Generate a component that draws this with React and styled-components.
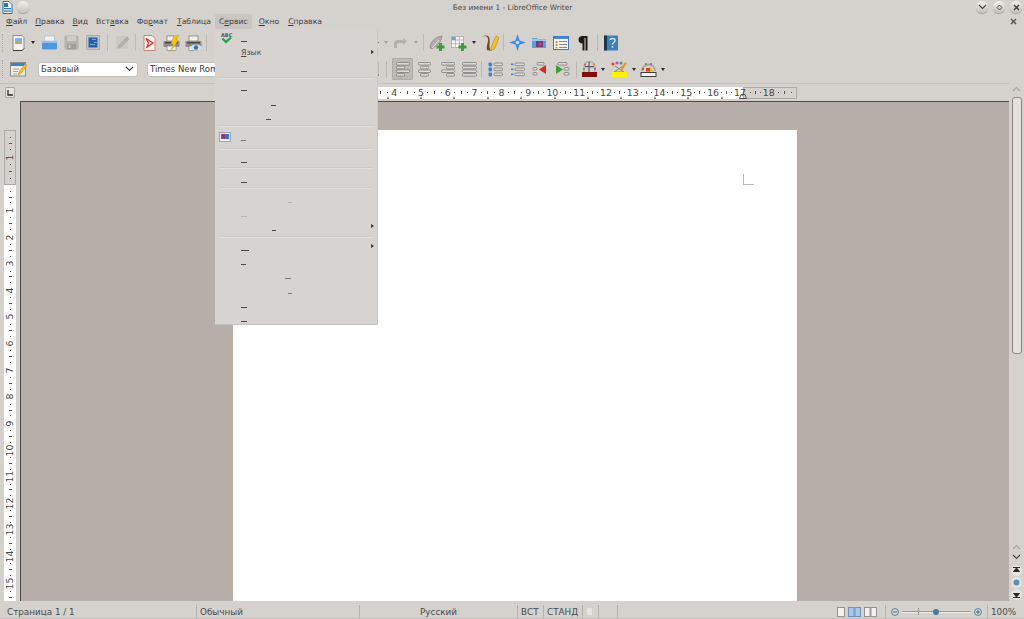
import React from 'react';
import styled, { createGlobalStyle } from 'styled-components';

const GlobalStyle = createGlobalStyle`
  html, body {
    margin: 0;
    padding: 0;
    width: 1024px;
    height: 619px;
    overflow: hidden;
    background: #d5d1cd;
  }
  #root { width: 1024px; height: 619px; }
`;

const CM = 26.8;
const CM_V = 26.64;

const Window = styled.div`
  position: relative;
  display: flex;
  flex-direction: column;
  width: 1024px;
  height: 619px;
  overflow: hidden;
  background: #d5d1cd;
  color: #3f3d3c;
  font-family: "DejaVu Sans", sans-serif;
  font-size: 7.7px;
`;

const TitleBar = styled.div`
  display: flex;
  align-items: center;
  height: 14px;
  padding: 0 0 0 2px;
  flex: none;
`;

const Title = styled.div`
  flex: 1;
  text-align: center;
  margin-left: 20px;
  padding-top: 1px;
  font-size: 7.4px;
  color: #4a4847;
`;

const WinButtons = styled.div`
  display: flex;
  gap: 5px;
  padding-right: 2px;
`;

const RoundBtn = styled.div`
  display: flex;
  align-items: center;
  justify-content: center;
  width: 12px;
  height: 12px;
  border-radius: 50%;
  background: linear-gradient(#f2f0ee, #c4c0bc);
  box-shadow: 0 1px 1px rgba(0, 0, 0, 0.25);
  margin-left: ${p => p.$ml || 0}px;
`;

const MenuBar = styled.div`
  display: flex;
  align-items: center;
  height: 15px;
  padding: 0 3px 0 2px;
  flex: none;
`;

const MenuName = styled.div`
  padding: 0 4px 0 4px;
  margin-right: ${p => p.$mr || 0}px;
  height: 15px;
  line-height: 16px;
  border-radius: 2px;
  background: ${p => (p.$open ? '#c9c5c1' : 'transparent')};
  u { text-underline-offset: 1px; }
`;

const CloseDoc = styled.div`
  margin-left: auto;
  padding-right: 4px;
  display: flex;
`;

const Toolbar = styled.div`
  display: flex;
  align-items: center;
  height: ${p => p.$h}px;
  padding-left: 2px;
  flex: none;
`;

const Grip = styled.div`
  width: 0;
  height: 18px;
  margin-right: 4px;
  border-left: 1px dotted #aaa6a2;
`;

const Tool = styled.div`
  display: flex;
  align-items: center;
  justify-content: center;
  flex: none;
  width: ${p => p.$w}px;
  height: ${p => (p.$active ? 22 : 20)}px;
  border-radius: 2px;
  background: ${p => (p.$active ? '#bdb9b5' : 'transparent')};
  box-shadow: ${p => (p.$active ? 'inset 0 0 0 1px #aeaaa6' : 'none')};
`;

const Sep = styled.div`
  display: flex;
  justify-content: center;
  flex: none;
  width: ${p => p.$w}px;
  &::after {
    content: '';
    width: 1px;
    height: 17px;
    background: #bcb8b4;
  }
`;

const Drop = styled.div`
  display: flex;
  align-items: center;
  justify-content: center;
  flex: none;
  width: ${p => p.$w}px;
  &::after {
    content: '';
    border-left: 2.5px solid transparent;
    border-right: 2.5px solid transparent;
    border-top: 3px solid ${p => (p.$dim ? '#a5a19d' : '#2c2a29')};
  }
`;

const Gap = styled.div`
  flex: none;
  width: ${p => p.$w}px;
`;

const Combo = styled.div`
  display: flex;
  align-items: center;
  justify-content: space-between;
  flex: none;
  box-sizing: border-box;
  width: 100px;
  height: 15px;
  padding: 0 3px 0 2px;
  background: #fff;
  border: 1px solid #c2beba;
  border-radius: 3px;
  font-size: 8.5px;
  color: #3a3837;
`;

const Body = styled.div`
  display: flex;
  flex: 1;
  min-height: 0;
  margin-top: 1px;
`;

const LeftCol = styled.div`
  display: flex;
  flex-direction: column;
  flex: 1;
  min-width: 0;
`;

const RulerRow = styled.div`
  display: flex;
  align-items: flex-end;
  height: 18px;
  flex: none;
  padding-left: 5px;
  padding-bottom: 2px;
  border-top: 1px solid #c3bfbb;
  box-sizing: border-box;
`;

const Corner = styled.div`
  display: flex;
  align-items: center;
  justify-content: center;
  box-sizing: border-box;
  width: 10px;
  height: 11px;
  margin-right: 218px;
  margin-bottom: 1px;
  background: #e4e1de;
  border: 1px solid #a9a5a1;
  border-radius: 1px;
`;

const HRuler = styled.div`
  display: flex;
  height: 12px;
  width: 564px;
  box-sizing: border-box;
`;

const RulerGrey = styled.div`
  display: flex;
  flex-direction: ${p => (p.$vert ? 'column' : 'row')};
  flex: none;
  box-sizing: border-box;
  overflow: hidden;
  ${p => (p.$vert
    ? `height: ${p.$len}px; width: 12px; padding-top: ${p.$pad}px;`
    : `width: ${p.$len}px; height: 12px; padding-left: ${p.$pad}px; padding-bottom: 1px;`)}
  background: #d5d1cd;
  border: 1px solid #aeaaa6;
`;

const RulerWhite = styled.div`
  position: relative;
  z-index: 1;
  display: flex;
  flex-direction: ${p => (p.$vert ? 'column' : 'row')};
  flex: none;
  box-sizing: border-box;
  ${p => (p.$vert
    ? `flex: 1; min-height: 0; width: 12px; padding-top: ${p.$pad}px; overflow: hidden;`
    : `width: ${p.$len}px; height: 12px; padding-left: ${p.$pad}px; padding-bottom: 2px;`)}
  background: #fff;
`;

const RulerCell = styled.div`
  display: grid;
  flex: none;
  ${p => (p.$vert
    ? `height: ${CM_V}px; width: 100%; grid-template-rows: repeat(4, 1fr);`
    : `width: ${CM}px; height: 100%; grid-template-columns: repeat(4, 1fr);`)}
  justify-items: center;
  align-items: center;
`;

const Dot = styled.i`
  display: block;
  width: 1px;
  height: 1px;
  background: #55524f;
`;

const Tick = styled.i`
  display: block;
  width: ${p => (p.$vert ? 3 : 1)}px;
  height: ${p => (p.$vert ? 1 : 3)}px;
  background: #55524f;
`;

const Num = styled.span`
  position: relative;
  z-index: 1;
  font-size: 9.4px;
  line-height: 9px;
  white-space: nowrap;
  color: #474544;
  transform: ${p => (p.$vert ? 'rotate(-90deg)' : 'none')};
`;

const TabLayer = styled.div`
  position: absolute;
  left: 0;
  bottom: 0;
  display: flex;
`;

const TabStop = styled.div`
  display: flex;
  justify-content: flex-end;
  width: 33.4px;
  &::after {
    content: '';
    margin-right: -1.5px;
    border-left: 1.5px solid transparent;
    border-right: 1.5px solid transparent;
    border-bottom: 3px solid #6a6764;
  }
`;

const MarginHandle = styled.div`
  position: absolute;
  right: -4px;
  bottom: 0;
  z-index: 2;
  display: flex;
`;

const Main = styled.div`
  display: flex;
  flex: 1;
  min-height: 0;
`;

const VRuler = styled.div`
  display: flex;
  flex-direction: column;
  flex: none;
  width: 12px;
  margin-left: 4px;
  margin-right: 4px;
  padding-top: 29px;
`;

const Workspace = styled.div`
  display: flex;
  justify-content: center;
  flex: 1;
  min-width: 0;
  overflow: hidden;
  padding-top: 28px;
  background: #b7aeaa;
  border-top: 1px solid #4e4a48;
  border-left: 1px solid #4e4a48;
`;

const Page = styled.div`
  position: relative;
  flex: none;
  width: 564px;
  height: 900px;
  background: #fff;
`;

const CropMark = styled.div`
  position: absolute;
  left: 510px;
  top: 44px;
  width: 10px;
  height: 10px;
  border-left: 1px solid #b9b5b1;
  border-bottom: 1px solid #b9b5b1;
`;

const ScrollCol = styled.div`
  display: flex;
  flex-direction: column;
  align-items: center;
  flex: none;
  width: 15px;
  padding-top: 3px;
  padding-bottom: 1px;
  box-sizing: border-box;
`;

const Chev = styled.div`
  display: flex;
  justify-content: center;
  height: ${p => p.$h}px;
`;

const Thumb = styled.div`
  box-sizing: border-box;
  width: 10px;
  height: 257px;
  margin-top: 1px;
  background: #e3e0dd;
  border: 1px solid #8b8784;
  border-radius: 3px;
`;

const ScrollFill = styled.div`
  flex: 1;
`;

const NavBtn = styled.div`
  display: flex;
  align-items: center;
  justify-content: center;
  width: 11px;
  height: 11px;
  margin-top: 1px;
  border-radius: 50%;
  background: #e6e3e0;
`;

const StatusBar = styled.div`
  display: flex;
  align-items: flex-start;
  flex: none;
  height: 18px;
  padding-top: 4px;
  box-sizing: border-box;
  background: linear-gradient(#d5d1cd 16px, #c2beba);
  font-size: 8.8px;
  color: #4c4a49;
`;

const Cell = styled.div`
  display: flex;
  align-items: center;
  justify-content: ${p => (p.$center ? 'center' : 'flex-start')};
  gap: ${p => p.$gap || 0}px;
  flex: none;
  box-sizing: border-box;
  width: ${p => p.$w}px;
  height: 13px;
  padding-left: ${p => p.$pl || 0}px;
  border-right: ${p => (p.$bare ? 'none' : '1px solid #b5b1ad')};
`;

const SliderTrack = styled.div`
  position: relative;
  width: 69px;
  height: 1px;
  background: #9b9794;
  box-shadow: 0 1px 0 #eeeceb;
`;

const SliderMid = styled.i`
  position: absolute;
  left: 16px;
  top: -3px;
  width: 1px;
  height: 7px;
  background: #9b9794;
`;

const SliderKnob = styled.i`
  position: absolute;
  left: 31px;
  top: -2.5px;
  width: 6px;
  height: 6px;
  border-radius: 50%;
  background: #4d7a9c;
`;

const Menu = styled.div`
  position: absolute;
  left: 215px;
  top: 29px;
  z-index: 5;
  display: flex;
  flex-direction: column;
  box-sizing: border-box;
  width: 163px;
  height: 296px;
  background: #d6d3d0;
  border-right: 1px solid #cbc8c5;
  border-bottom: 1px solid #c4c1be;
`;

const MenuRow = styled.div`
  position: relative;
  display: flex;
  align-items: flex-end;
  flex: none;
  box-sizing: border-box;
  height: ${p => p.$h}px;
  padding-left: ${p => p.$x}px;
  padding-bottom: 2px;
`;

const Dash = styled.i`
  display: block;
  width: ${p => p.$w || 6}px;
  height: 1px;
  background: ${p => (p.$faint ? '#b8b5b2' : p.$soft ? '#7a7775' : '#4a4745')};
`;

const MenuText = styled.span`
  font-size: 7.8px;
  line-height: 10px;
  color: #4b4947;
  u { text-underline-offset: 1px; }
`;

const MenuIcon = styled.span`
  position: absolute;
  left: ${p => p.$left}px;
  bottom: ${p => p.$bottom}px;
  display: flex;
`;

const Arrow = styled.i`
  position: absolute;
  right: 3px;
  top: 50%;
  margin-top: -2px;
  border-top: 2px solid transparent;
  border-bottom: 2px solid transparent;
  border-left: 3px solid #3a3837;
`;

const MenuSep = styled.div`
  display: flex;
  align-items: center;
  flex: none;
  height: ${p => p.$h}px;
  padding: 0 4px;
  &::after {
    content: '';
    flex: 1;
    height: 1px;
    background: #cfccc9;
    box-shadow: 0 1px 0 #e0dedb;
  }
`;

const Ico = ({ w = 16, h = 16, children }) => (
  <svg width={w} height={h} viewBox={`0 0 ${w} ${h}`} fill="none">{children}</svg>
);

const AppIcon = () => (
  <Ico w={11} h={13}>
    <path d="M1 .5h6l3 3v9H1z" fill="#f4f8fb" stroke="#2f6f9f" />
    <path d="M2 2h4v4H2zM2 7h7v1.2H2zM2 9.5h7v1.2H2z" fill="#2f78ad" />
  </Ico>
);

const NewDoc = () => (
  <Ico w={13} h={16}>
    <path d="M1 .5h9l2 2v11l-2 2H1z" fill="#f5f4ef" stroke="#8f8b85" />
    <rect x="3" y="3" width="7" height="6" fill="#7fb4dc" />
    <path d="M3 9l2-3 2 2 1-1 2 2z" fill="#c9a93f" />
    <path d="M1 15.5h9l2-2" stroke="#3c3a38" strokeWidth="1" />
  </Ico>
);

const OpenIcon = () => (
  <Ico w={17} h={15}>
    <path d="M4 1h9l1 5H3z" fill="#eef2f6" stroke="#a9b8c6" strokeWidth=".6" />
    <path d="M1 6h15v7a1.5 1.5 0 0 1-1.5 1.5h-12A1.5 1.5 0 0 1 1 13z" fill="#4f97dc" />
    <path d="M1 6h15v2H1z" fill="#8cc0ee" />
  </Ico>
);

const SaveIcon = () => (
  <Ico w={15} h={15}>
    <rect x=".5" y=".5" width="14" height="14" rx="1.5" fill="#b5b1ae" />
    <rect x="3" y="1" width="9" height="5" fill="#cfccca" />
    <rect x="3" y="9" width="9" height="5.5" fill="#9f9c99" />
    <rect x="4.5" y="10" width="2" height="3" fill="#c9c6c3" />
  </Ico>
);

const BlueDoc = () => (
  <Ico w={14} h={15}>
    <rect x=".5" y=".5" width="13" height="14" fill="#c7c5c3" stroke="#8d8a88" strokeDasharray="1 1" />
    <rect x="2.5" y="2.5" width="9" height="10" fill="#2d5fa8" />
    <path d="M6 4h4v1H6zM8 7h3v1H8zM4 9h5v1H4z" fill="#7da9e2" />
  </Ico>
);

const PencilIcon = () => (
  <Ico w={15} h={15}>
    <rect x="1" y="1" width="12" height="13" fill="#cbc8c4" />
    <path d="M3 13l1-3 8-8 2 2-8 8z" fill="#b3b0ac" stroke="#a3a09c" strokeWidth=".5" />
  </Ico>
);

const PdfIcon = () => (
  <Ico w={13} h={16}>
    <path d="M1 .5h8l3 3v12H1z" fill="#f7f4f2" stroke="#c9837c" />
    <path d="M3 3.5l7 4.5-6 4 1.5-4z" fill="none" stroke="#d5312a" strokeWidth="1.3" />
  </Ico>
);

const PrintBase = () => (
  <>
    <rect x="4" y="1" width="9" height="5" fill="#f2f1ef" stroke="#77736f" strokeWidth=".7" />
    <rect x=".5" y="6" width="16" height="6" rx="1" fill="#8e8b88" />
    <rect x="2" y="7" width="13" height="1.4" fill="#4a4846" />
    <rect x="4" y="11" width="9" height="4.5" fill="#f4f3f1" stroke="#77736f" strokeWidth=".6" />
  </>
);

const FlashPrint = () => (
  <Ico w={17} h={16}>
    <PrintBase />
    <path d="M11 0h5l-3 5h2.500L8 16l2-7H8z" fill="#f5c60f" stroke="#b98a0c" strokeWidth=".4" />
  </Ico>
);

const PreviewPrint = () => (
  <Ico w={17} h={16}>
    <PrintBase />
    <ellipse cx="11" cy="12.5" rx="5.5" ry="3" fill="#d2e3f0" />
    <circle cx="11" cy="12.5" r="2.2" fill="#2f76ad" />
  </Ico>
);

const SpellCheck = () => (
  <Ico w={13} h={12}>
    <text x="1" y="5" fontSize="5" fontWeight="700" fontFamily="DejaVu Sans, sans-serif" fill="#555">ABC</text>
    <path d="M2.5 6.500l3.500 3.500L11 5.500" stroke="#2a9a45" strokeWidth="2.200" />
  </Ico>
);

const RedoGrey = () => (
  <Ico w={16} h={12}>
    <path d="M2 11V7a4 4 0 0 1 4-4h5V1l4 3.5L11 8V6H7a2 2 0 0 0-2 2v3z" fill="#b3b0ac" />
  </Ico>
);

const DrawPlus = () => (
  <Ico w={16} h={16}>
    <path d="M1 13C1 7 6 2 13 1c-1 5-2 7-5 9l-5 4z" fill="#b0adaa" stroke="#7e7b78" strokeWidth=".6" />
    <path d="M3 13L10 5" stroke="#e8e6e4" />
    <path d="M10 8h3v2.5h2.5v3H13V16h-3v-2.5H7.5v-3H10z" fill="#3f9e3c" />
  </Ico>
);

const TablePlus = () => (
  <Ico w={16} h={16}>
    <rect x=".5" y="1.5" width="12" height="11" fill="#f4f3f1" stroke="#b5b2af" />
    <path d="M4.5 1.5v11M8.5 1.5v11M.5 5h12M.5 8.7h12" stroke="#a8a5a2" strokeWidth=".7" />
    <rect x="1" y="2" width="3.5" height="3" fill="#6c9fd6" />
    <path d="M10 8h3v2.5h2.5v3H13V16h-3v-2.5H7.5v-3H10z" fill="#3f9e3c" />
  </Ico>
);

const BrushIcon = () => (
  <Ico w={17} h={16}>
    <path d="M0 2c3-2 6-1 6 3 0 4-2 6-1 10l4 1C6 12 9 7 7 2 6 0 2 0 0 2z" fill="#7a4a1f" />
    <path d="M9 12L14 1l3 1.500-4 11-4 2z" fill="#f0c02a" stroke="#a87f10" strokeWidth=".5" />
  </Ico>
);

const StarIcon = () => (
  <Ico w={17} h={17}>
    <path d="M8.500 0l2 6.500 6.500 2-6.500 2-2 6.500-2-6.500L0 8.500l6.500-2z" fill="#3b8be0" />
    <circle cx="8.500" cy="8.500" r="1.800" fill="#bcdcf8" />
  </Ico>
);

const GalleryIcon = () => (
  <Ico w={16} h={13}>
    <path d="M1 2h5l1 1.5h8V12H1z" fill="#5a9fd8" />
    <path d="M1 3h6l1 1h7v1H1z" fill="#9cc6ea" />
    <rect x="5" y="5" width="7" height="6" fill="#6b3f7f" />
    <rect x="7.5" y="6.5" width="3" height="3" fill="#c64570" />
  </Ico>
);

const ListWin = () => (
  <Ico w={16} h={14}>
    <rect x=".5" y=".5" width="15" height="13" fill="#f6f6f4" stroke="#3f77c4" />
    <rect x="1" y="1" width="14" height="2" fill="#4b86d4" />
    <path d="M2.5 5h2v2h-2zM2.5 8h2v2h-2zM2.5 11h2v1.5h-2z" fill="#e68a2e" />
    <path d="M6 5.5h8M6 8.5h8M6 11.5h8" stroke="#8c8a88" />
  </Ico>
);

const Pilcrow = () => (
  <Ico w={10} h={16}>
    <path d="M4.500 1H9.500V15.500H7.500V3H6.500V15.500H4.500V8.500C2 8.500.5 7 .5 4.800S2 1 4.500 1z" fill="#1d1c1b" />
  </Ico>
);

const HelpBook = () => (
  <Ico w={14} h={16}>
    <rect x="0" y=".5" width="14" height="15" rx="1" fill="#3f7fb8" />
    <rect x="0" y=".5" width="3" height="15" fill="#1c3550" />
    <path d="M6 5c0-2 5-2 5 .5 0 2-2.500 2-2.500 4" stroke="#d9e9f6" strokeWidth="1.400" />
    <rect x="7.700" y="11" width="1.600" height="1.600" fill="#d9e9f6" />
  </Ico>
);

const StyleIcon = () => (
  <Ico w={17} h={16}>
    <rect x=".5" y="1.500" width="15" height="13.500" fill="#efeee9" stroke="#8e8b87" />
    <rect x="1" y="2" width="14" height="3" fill="#3f82cc" />
    <path d="M3 8h6M3 10.500h5M3 13h4" stroke="#a5a29e" />
    <path d="M8 14l1-3 6-8 2 1.500-6 8z" fill="#f1c126" stroke="#9c7a12" strokeWidth=".4" />
  </Ico>
);

const ALIGN_ROWS = {
  left: [[1, 13], [1, 8], [1, 13], [1, 8]],
  center: [[2, 12], [4, 8], [2, 12], [4, 8]],
  right: [[2, 13], [7, 8], [2, 13], [7, 8]],
  justify: [[1, 14], [1, 14], [1, 14], [1, 14]],
};

const AlignIcon = ({ kind }) => (
  <Ico w={16} h={15}>
    {ALIGN_ROWS[kind].map(([x, w], i) => (
      <rect key={i} x={x + 0.5} y={0.5 + i * 3.7} width={w} height="2.600" rx="1" fill="#dcdad7" stroke="#7e7b78" strokeWidth=".8" />
    ))}
  </Ico>
);

const BulletIcon = () => (
  <Ico w={15} h={15}>
    {[0, 5, 10].map(y => (
      <g key={y}>
        <rect x=".5" y={y + 0.5} width="3.500" height="4" rx="1" fill="#3d84d6" />
        <rect x="6" y={y + 1} width="8.500" height="2.600" rx="1" fill="#dcdad7" stroke="#7e7b78" strokeWidth=".8" />
      </g>
    ))}
  </Ico>
);

const NumberIcon = () => (
  <Ico w={15} h={15}>
    {[0, 5, 10].map(y => (
      <g key={y}>
        <rect x="1" y={y + 1.500} width="2.500" height="1.600" fill="#3d84d6" />
        <rect x="5" y={y + 1} width="9.500" height="2.600" rx="1" fill="#dcdad7" stroke="#7e7b78" strokeWidth=".8" />
      </g>
    ))}
  </Ico>
);

const OutdentIcon = () => (
  <Ico w={15} h={15}>
    <rect x="5" y=".5" width="7" height="2.600" rx="1" fill="#dcdad7" stroke="#7e7b78" strokeWidth=".8" />
    <rect x="1" y="5.500" width="4" height="2.600" rx="1" fill="#dcdad7" stroke="#7e7b78" strokeWidth=".8" />
    <rect x="1" y="10.500" width="4" height="2.600" rx="1" fill="#dcdad7" stroke="#7e7b78" strokeWidth=".8" />
    <path d="M14 3v9L7 7.500z" fill="#d42a24" />
  </Ico>
);

const IndentIcon = () => (
  <Ico w={15} h={15}>
    <rect x="3" y=".5" width="9" height="2.600" rx="1" fill="#dcdad7" stroke="#7e7b78" strokeWidth=".8" />
    <rect x="9" y="5.500" width="5" height="2.600" rx="1" fill="#dcdad7" stroke="#7e7b78" strokeWidth=".8" />
    <rect x="9" y="10.500" width="5" height="2.600" rx="1" fill="#dcdad7" stroke="#7e7b78" strokeWidth=".8" />
    <path d="M1 3v9l7-4.500z" fill="#3f9e3c" />
  </Ico>
);

const FontColorIcon = () => (
  <Ico w={17} h={16}>
    <path d="M8 1h1M8 1v10" stroke="#4a4846" />
    <path d="M3 11V6a5 5 0 0 1 11 0v5" stroke="#a8a5a2" strokeWidth="1.200" />
    <circle cx="3" cy="8" r="1.100" fill="#5aa84a" />
    <circle cx="4" cy="3.500" r="1.100" fill="#d8468c" />
    <circle cx="13" cy="3.500" r="1.100" fill="#e08a2c" />
    <circle cx="14" cy="8" r="1.100" fill="#8a5ac4" />
    <rect x="4" y="5" width="9" height="1.200" fill="#5a5856" />
    <rect x="1" y="11" width="15" height="5" fill="#7f0f0f" />
  </Ico>
);

const HighlightIcon = () => (
  <Ico w={17} h={16}>
    <circle cx="2" cy="3" r="1.500" fill="#d8462c" />
    <circle cx="6" cy="2" r="1.500" fill="#c24ec0" />
    <circle cx="10" cy="2" r="1.500" fill="#3f9e5c" />
    <path d="M4 5l9 6H3l9-6" stroke="#8a8784" />
    <path d="M9 9l5-8 2 1-5 8z" fill="#e89a2a" />
    <rect x="1" y="11" width="15" height="5" fill="#fff200" />
  </Ico>
);

const BgColorIcon = () => (
  <Ico w={17} h={16}>
    <path d="M2 10a6.500 6.500 0 0 1 13 0" stroke="#a9a5a2" strokeWidth="2" />
    <circle cx="3" cy="8" r="1.100" fill="#d83a2c" />
    <circle cx="6" cy="3" r="1.100" fill="#5a9a3c" />
    <circle cx="11" cy="3" r="1.100" fill="#8a5ac4" />
    <path d="M6 10l4-4 4 5z" fill="#f0b42a" />
    <rect x="6" y="7" width="4" height="3.500" fill="#d8402c" />
    <rect x="1" y="11.500" width="15" height="4" fill="#f4f3f1" stroke="#3d3b3a" />
  </Ico>
);

const Chevron = ({ up, dark }) => (
  <Ico w={9} h={6}>
    <path d={up ? 'M1 5l3.500-3.500L8 5' : 'M1 1l3.500 3.500L8 1'} stroke={dark ? '#4a4846' : '#aaa6a2'} strokeWidth="1.200" />
  </Ico>
);

const SmallX = ({ color = '#4a4f58' }) => (
  <Ico w={7} h={7}>
    <path d="M1 1l5 5M6 1L1 6" stroke={color} strokeWidth="1.400" />
  </Ico>
);

const MiniPage = ({ wide, open, blue }) => (
  <Ico w={wide ? 13 : 8} h={10}>
    {wide ? (
      <>
        <rect x=".5" y=".5" width="5.500" height="9" fill={blue ? '#a9c7e6' : '#f3f2f0'} stroke={open ? '#94918e' : '#6d93ba'} />
        <rect x="7" y=".5" width="5.500" height="9" fill={blue ? '#a9c7e6' : '#f3f2f0'} stroke={open ? '#94918e' : '#6d93ba'} />
      </>
    ) : (
      <rect x=".5" y=".5" width="7" height="9" fill="#f3f2f0" stroke="#94918e" />
    )}
  </Ico>
);

const ZoomBtn = ({ plus }) => (
  <Ico w={8} h={8}>
    <circle cx="4" cy="4" r="3.400" fill="#e4e2df" stroke="#4d7a9c" />
    <path d={plus ? 'M2 4h4M4 2v4' : 'M2 4h4'} stroke="#2f5f84" />
  </Ico>
);

// one centimetre of ruler: quarter dot, half tick, quarter dot, number
const RulerUnit = ({ n, vert }) => (
  <RulerCell $vert={vert}>
    <Dot />
    <Tick $vert={vert} />
    <Dot />
    {n ? <Num $vert={vert}>{n}</Num> : <span />}
  </RulerCell>
);

const range = (a, b) => Array.from({ length: b - a + 1 }, (_, i) => a + i);

const MENU_NAMES = [
  ['Ф', 'айл', 0],
  ['П', 'равка', 0],
  ['В', 'ид', 0],
  ['', 'Вст', 0, 'а', 'вка'],
  ['', 'Фо', 1, 'р', 'мат'],
  ['Т', 'аблица', 0],
];

// heights and dash places taken from the open "Сервис" menu
const MENU_ROWS = [
  { h: 15, x: 26, w: 6 },
  { h: 16, x: 26, text: true, arrow: true },
  { h: 14, x: 26, w: 6 },
  { sep: 6 },
  { h: 13, x: 26, w: 6 },
  { h: 15, x: 56, w: 5 },
  { h: 14, x: 51, w: 5 },
  { sep: 6 },
  { h: 15, x: 26, w: 5, soft: true, icon: true },
  { sep: 10 },
  { h: 12, x: 26, w: 6 },
  { sep: 4 },
  { h: 16, x: 26, w: 6 },
  { sep: 4 },
  { h: 16, x: 73, w: 4, faint: true },
  { h: 14, x: 26, w: 6, faint: true },
  { h: 14, x: 57, w: 4, arrow: true },
  { sep: 6 },
  { h: 14, x: 26, w: 8, arrow: true },
  { h: 14, x: 26, w: 5 },
  { h: 14, x: 70, w: 6, soft: true },
  { h: 15, x: 73, w: 4, soft: true },
  { h: 14, x: 26, w: 6 },
  { h: 14, x: 26, w: 6 },
];

const MenuIconPic = () => (
  <Ico w={12} h={10}>
    <rect x=".5" y=".5" width="11" height="9" fill="#e9e8e6" stroke="#a5a3a1" />
    <rect x="2" y="2" width="8" height="5" fill="#3a6fd8" />
    <rect x="3" y="2.500" width="3" height="4" fill="#a52a5a" />
    <rect x="2" y="8" width="8" height="1" fill="#f7f7f7" />
  </Ico>
);

export default function App() {
  return (
    <Window>
      <GlobalStyle />

      <TitleBar>
        <AppIcon />
        <RoundBtn $ml={4} />
        <Title>Без имени 1 - LibreOffice Writer</Title>
        <WinButtons>
          <RoundBtn><Chevron dark /></RoundBtn>
          <RoundBtn>
            <Ico w={7} h={7}><path d="M3.500 1L6 3.500 3.500 6 1 3.500z" stroke="#4a4846" /></Ico>
          </RoundBtn>
          <RoundBtn><SmallX color="#3f3d3c" /></RoundBtn>
        </WinButtons>
      </TitleBar>

      <MenuBar>
        {MENU_NAMES.map(([ul, rest, mr, ul2, tail], i) => (
          <MenuName key={i} $mr={mr}>
            {ul ? <u>{ul}</u> : null}{rest}{ul2 ? <u>{ul2}</u> : null}{tail}
          </MenuName>
        ))}
        <MenuName $open $mr={3}>С<u>е</u>рвис</MenuName>
        <MenuName $mr={1}><u>О</u>кно</MenuName>
        <MenuName><u>С</u>правка</MenuName>
        <CloseDoc><SmallX /></CloseDoc>
      </MenuBar>

      <Toolbar $h={27}>
        <Grip />
        <Tool $w={22}><NewDoc /></Tool>
        <Drop $w={8} />
        <Tool $w={24}><OpenIcon /></Tool>
        <Tool $w={20}><SaveIcon /></Tool>
        <Tool $w={24}><BlueDoc /></Tool>
        <Sep $w={5} />
        <Tool $w={24}><PencilIcon /></Tool>
        <Sep $w={3} />
        <Tool $w={24}><PdfIcon /></Tool>
        <Tool $w={20}><FlashPrint /></Tool>
        <Tool $w={24}><PreviewPrint /></Tool>
        <Sep $w={3} />
        <Gap $w={166} />
        <Tool $w={8}><Dash $w={2} $soft /></Tool>
        <Drop $w={8} $dim />
        <Tool $w={20}><RedoGrey /></Tool>
        <Drop $w={12} $dim />
        <Sep $w={3} />
        <Tool $w={24}><DrawPlus /></Tool>
        <Tool $w={20}><TablePlus /></Tool>
        <Drop $w={10} />
        <Tool $w={22}><BrushIcon /></Tool>
        <Sep $w={4} />
        <Tool $w={24}><StarIcon /></Tool>
        <Tool $w={20}><GalleryIcon /></Tool>
        <Tool $w={24}><ListWin /></Tool>
        <Tool $w={20}><Pilcrow /></Tool>
        <Sep $w={8} />
        <Tool $w={20}><HelpBook /></Tool>
      </Toolbar>

      <Toolbar $h={26}>
        <Grip />
        <Tool $w={22}><StyleIcon /></Tool>
        <Gap $w={9} />
        <Combo>Базовый<Chevron dark /></Combo>
        <Gap $w={9} />
        <Combo>Times New Roman<Chevron dark /></Combo>
        <Gap $w={128} />
        <Tool $w={6}>
          <Ico w={2} h={14}><path d="M1 0v11" stroke="#a5a19e" /><path d="M1 12v2" stroke="#5a5856" /></Ico>
        </Tool>
        <Sep $w={11} />
        <Tool $w={21} $active><AlignIcon kind="left" /></Tool>
        <Tool $w={22}><AlignIcon kind="center" /></Tool>
        <Tool $w={23}><AlignIcon kind="right" /></Tool>
        <Tool $w={21}><AlignIcon kind="justify" /></Tool>
        <Sep $w={4} />
        <Tool $w={24}><BulletIcon /></Tool>
        <Tool $w={20}><NumberIcon /></Tool>
        <Tool $w={24}><OutdentIcon /></Tool>
        <Tool $w={22}><IndentIcon /></Tool>
        <Sep $w={6} />
        <Tool $w={20}><FontColorIcon /></Tool>
        <Drop $w={8} />
        <Tool $w={24}><HighlightIcon /></Tool>
        <Drop $w={5} />
        <Tool $w={24}><BgColorIcon /></Tool>
        <Drop $w={6} />
      </Toolbar>

      <Body>
        <LeftCol>
          <RulerRow>
            <Corner>
              <Ico w={6} h={6}><path d="M1 0v5h5" stroke="#2c2a29" strokeWidth="1.300" /></Ico>
            </Corner>
            <HRuler>
              <RulerGrey $len={54} $pad={0} />
              <RulerWhite $len={456} $pad={3.35}>
                {range(1, 17).map(n => <RulerUnit key={n} n={n} />)}
                <TabLayer>
                  {range(1, 13).map(n => <TabStop key={n} />)}
                </TabLayer>
                <MarginHandle>
                  <Ico w={8} h={5}><path d="M2 .5h4l1.500 4H.5z" stroke="#55524f" /></Ico>
                </MarginHandle>
              </RulerWhite>
              <RulerGrey $len={54} $pad={4}>
                <RulerUnit n={18} />
                <RulerUnit />
              </RulerGrey>
            </HRuler>
          </RulerRow>
          <Main>
            <VRuler>
              <RulerGrey $vert $len={55} $pad={4}>
                <RulerUnit n={1} vert />
                <RulerUnit vert />
              </RulerGrey>
              <RulerWhite $vert $pad={3.3}>
                {range(1, 15).map(n => <RulerUnit key={n} n={n} vert />)}
                <RulerUnit vert />
              </RulerWhite>
            </VRuler>
            <Workspace>
              <Page><CropMark /></Page>
            </Workspace>
          </Main>
        </LeftCol>
        <ScrollCol>
          <Chev $h={10}><Chevron up /></Chev>
          <Thumb />
          <ScrollFill />
          <Chev $h={10}><Chevron up /></Chev>
          <Chev $h={10}><Chevron dark /></Chev>
          <NavBtn>
            <Ico w={7} h={7}><path d="M0 .5h7M3.500 1L6.500 4.500H.5z" stroke="#2c2a29" fill="#2c2a29" /></Ico>
          </NavBtn>
          <NavBtn>
            <Ico w={7} h={7}><circle cx="3.500" cy="3.500" r="3" fill="#5d8cb4" /></Ico>
          </NavBtn>
          <NavBtn>
            <Ico w={7} h={7}><path d="M0 6.500h7M3.500 6L.5 2.500h6z" stroke="#2c2a29" fill="#2c2a29" /></Ico>
          </NavBtn>
        </ScrollCol>
      </Body>

      <StatusBar>
        <Cell $w={197} $pl={7}>Страница 1 / 1</Cell>
        <Cell $w={163} $pl={3}>Обычный</Cell>
        <Cell $w={158} $center>Русский</Cell>
        <Cell $w={26} $pl={3}>ВСТ</Cell>
        <Cell $w={39} $pl={3}>СТАНД</Cell>
        <Cell $w={16} $pl={3}>
          <Ico w={7} h={9}><rect width="7" height="9" fill="#e6e4e1" stroke="#c4c1be" /></Ico>
        </Cell>
        <Cell $w={19} />
        <Cell $w={214} $bare />
        <Cell $w={54} $pl={5} $gap={3}>
          <MiniPage />
          <MiniPage wide blue />
          <MiniPage wide open />
        </Cell>
        <Cell $w={102} $pl={5} $gap={3}>
          <ZoomBtn />
          <SliderTrack><SliderMid /><SliderKnob /></SliderTrack>
          <ZoomBtn plus />
        </Cell>
        <Cell $w={36} $pl={3} $bare>100%</Cell>
      </StatusBar>

      <Menu>
        {MENU_ROWS.map((row, i) => {
          if (row.sep) return <MenuSep key={i} $h={row.sep} />;
          return (
            <MenuRow key={i} $h={row.h} $x={row.x}>
              {row.icon && <MenuIcon $left={4} $bottom={1}><MenuIconPic /></MenuIcon>}
              {i === 0 && <MenuIcon $left={5} $bottom={0}><SpellCheck /></MenuIcon>}
              {row.text
                ? <MenuText><u>Я</u>зык</MenuText>
                : <Dash $w={row.w} $faint={row.faint} $soft={row.soft} />}
              {row.arrow && <Arrow />}
            </MenuRow>
          );
        })}
      </Menu>
    </Window>
  );
}
